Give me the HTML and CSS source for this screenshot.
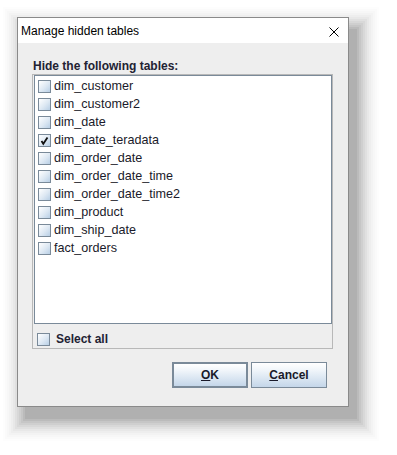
FILE: index.html
```html
<!DOCTYPE html>
<html>
<head>
<meta charset="utf-8">
<title>Manage hidden tables</title>
<link rel="stylesheet" href="styles.css">
</head>
<body>
<div class="window">
	<div class="titlebar">
		<span class="title">Manage hidden tables</span>
		<svg class="close" width="10" height="10" viewBox="0 0 10 10"><path d="M0.5 0.5 L9.5 9.5 M9.5 0.5 L0.5 9.5" stroke="#000" stroke-width="1" fill="none"/></svg>
	</div>
	<div class="content">
		<div class="label">Hide the following tables:</div>
		<div class="panel">
			<div class="list">
				<div class="item"><span class="box"></span>dim_customer</div>
				<div class="item"><span class="box"></span>dim_customer2</div>
				<div class="item"><span class="box"></span>dim_date</div>
				<div class="item"><span class="box checked"><svg width="11" height="11" viewBox="0 0 11 11"><path d="M2.5 6 L4.3 8.8 L8.5 2.5" stroke="#111" stroke-width="1.8" fill="none"/></svg></span>dim_date_teradata</div>
				<div class="item"><span class="box"></span>dim_order_date</div>
				<div class="item"><span class="box"></span>dim_order_date_time</div>
				<div class="item"><span class="box"></span>dim_order_date_time2</div>
				<div class="item"><span class="box"></span>dim_product</div>
				<div class="item"><span class="box"></span>dim_ship_date</div>
				<div class="item"><span class="box"></span>fact_orders</div>
			</div>
			<div class="selectall"><span class="box"></span>Select all</div>
		</div>
		<div class="buttons">
			<button class="btn default"><u>O</u>K</button>
			<button class="btn"><u>C</u>ancel</button>
		</div>
	</div>
</div>
</body>
</html>
```
FILE: styles.css
```css
html, body{
	margin: 0;
	background: #ffffff;
	font-family: "Liberation Sans", Arial, sans-serif;
}
body{
	min-height: 455px;
	padding-top: 17px;
	box-sizing: border-box;
}

.window{
	margin-left: 17px;
	width: 330px;
	height: 388px;
	border: 1px solid #8a8a8a;
	background: #eeeeee;
	display: flex;
	flex-direction: column;
	/* stepped shadow, soft falloff down and right */
	box-shadow:
		8px 12px 0 0 rgba(0,0,0,0.06),
		8px 12px 0 2px rgba(0,0,0,0.05),
		8px 12px 0 4px rgba(0,0,0,0.045),
		8px 12px 0 6px rgba(0,0,0,0.04),
		8px 12px 0 8px rgba(0,0,0,0.035),
		8px 12px 0 10px rgba(0,0,0,0.03),
		8px 12px 0 12px rgba(0,0,0,0.025),
		8px 12px 0 14px rgba(0,0,0,0.02),
		8px 12px 0 16px rgba(0,0,0,0.015),
		8px 12px 0 18px rgba(0,0,0,0.012),
		8px 12px 0 20px rgba(0,0,0,0.01),
		8px 12px 0 22px rgba(0,0,0,0.008);
}

.titlebar{
	height: 25px;
	background: #ffffff;
	display: flex;
	align-items: center;
	justify-content: space-between;
	padding: 0 9px 0 3px;
}
.title{
	font-size: 12px;
	color: #000;
	margin-top: 1px;
}
.close{
	display: block;
	margin-top: 2px;
}

.content{
	padding: 16px 15px 0 14px;
}
.label{
	font-size: 12px;
	font-weight: bold;
	line-height: 15px;
	height: 15px;
	color: #222233;
	padding-left: 1px;
}

.panel{
	height: 273px;
	border: 1px solid #b8b8b8;
	display: flex;
	flex-direction: column;
}
.list{
	margin-left: 1px;
	height: 246px;
	background: #ffffff;
	border: 1px solid #7a8a99;
	padding-top: 1px;
	box-sizing: content-box;
}
.item{
	height: 18px;
	display: flex;
	align-items: center;
	padding-left: 3px;
	font-size: 12.6px;
	color: #1a1a2a;
}

.box{
	width: 11px;
	height: 11px;
	border: 1px solid #7a8a99;
	background: linear-gradient(135deg, #ffffff 0%, #dde8f3 55%, #b8cfe5 100%);
	margin-right: 3px;
	display: flex;
	align-items: center;
	justify-content: center;
	flex: none;
}

.selectall{
	display: flex;
	align-items: center;
	margin-top: 8px;
	padding-left: 4px;
	font-size: 12px;
	font-weight: bold;
	color: #222233;
}
.selectall .box{
	margin-right: 6px;
}

.buttons{
	display: flex;
	justify-content: flex-end;
	gap: 3px;
	margin-top: 13px;
	padding-right: 6px;
}
.btn{
	width: 76px;
	height: 26px;
	border: 1px solid #7a8a99;
	background: linear-gradient(to bottom, #ffffff 0%, #f0f5fa 30%, #dde8f3 60%, #c4d6e9 100%);
	font-family: "Liberation Sans", Arial, sans-serif;
	font-size: 12px;
	font-weight: bold;
	color: #1a1a2a;
	padding: 0;
}
.btn.default{
	border: 2px solid #7a8a99;
}
```
